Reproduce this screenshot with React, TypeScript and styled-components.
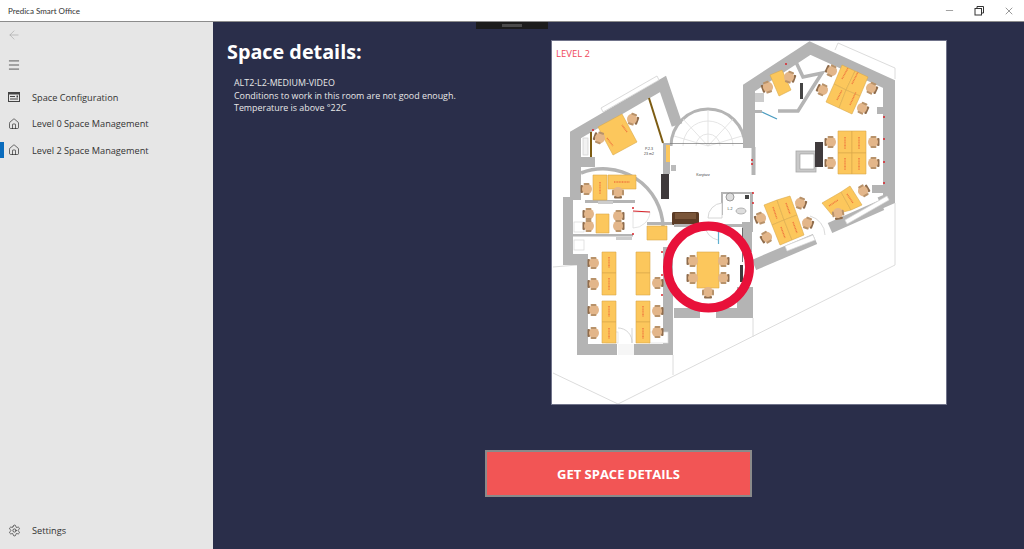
import styled, { createGlobalStyle } from "styled-components";
import { ArrowLeft, Menu, Minus, X, Settings, House } from "lucide-react";

const WALL = "#b4b4b4";
const DESK = "#fcc75c";
const DESK_LINE = "#d9a94c";

const GlobalStyle = createGlobalStyle`
  html, body {
    margin: 0;
    padding: 0;
    height: 100%;
    overflow: hidden;
    font-family: "Open Sans", "Noto Sans", sans-serif;
  }
  #root {
    height: 100%;
  }
`;

// desks as polygons, in page coordinates so they can be read against the screenshot
const desks: string[] = [
  "598,127 622,114 637,142 613,155",
  "593,175 607,175 607,200 593,200",
  "608,175 636,175 636,189 608,189",
  "596,214 609,214 609,233 596,233",
  "647,226 667,226 667,240 647,240",
  "602,252 616,252 616,273 602,273",
  "602,273 616,273 616,295 602,295",
  "602,301 616,301 616,322 602,322",
  "602,322 616,322 616,343 602,343",
  "636,252 650,252 650,273 636,273",
  "636,273 650,273 650,295 636,295",
  "636,301 650,301 650,322 636,322",
  "636,322 650,322 650,343 636,343",
  "770,75 782,70 791,90 779,96",
  "842,65 855,71 846,90 834,84",
  "855,71 868,77 860,96 846,90",
  "834,84 846,90 839,108 826,102",
  "846,90 860,96 852,114 839,108",
  "838,131 852,131 852,153 838,153",
  "852,131 866,131 866,153 852,153",
  "838,153 852,153 852,174 838,174",
  "852,153 866,153 866,174 852,174",
  "764,205 777,200 784,220 772,225",
  "777,200 790,196 797,215 784,220",
  "772,225 784,220 792,240 780,245",
  "784,220 797,215 804,235 792,240",
  "822,203 841,192 851,210 832,215",
  "841,192 850,186 862,205 851,210",
  "697,252 719,252 719,288 697,288",
];

// chair positions: x, y, direction of the backrest
const chairs: [number, number, number][] = [
  [632, 119, 110], [600, 138, 290], [587, 189, 270], [618, 192, 180],
  [589, 214, 270], [589, 226, 270], [618, 216, 90], [618, 226, 90],
  [594, 263, 270], [594, 284, 270], [594, 310, 270], [594, 333, 270],
  [657, 283, 90], [657, 311, 90], [657, 332, 90],
  [789, 77, 110], [768, 87, 250], [832, 71, 295], [823, 90, 295],
  [871, 88, 115], [862, 108, 115], [831, 142, 270], [831, 163, 270],
  [873, 142, 90], [873, 163, 90], [863, 191, 60], [838, 213, 170],
  [800, 203, 110], [807, 223, 110], [761, 218, 250], [767, 237, 240],
  [693, 261, 270], [693, 278, 270], [723, 261, 90], [723, 278, 90], [708, 292, 180],
];

const redDots: [number, number][] = [
  [884, 117], [884, 139], [884, 162], [884, 183], [633, 208], [633, 234],
  [662, 252], [662, 275], [662, 295], [753, 193], [753, 203], [786, 64],
  [593, 130], [752, 160], [752, 164],
];

const labels: [number, number, number, number][] = [
  [607, 138, 613, 146], [627, 132, 622, 125], [600, 182, 600, 194], [614, 182, 630, 182],
  [852, 84, 858, 72], [842, 79, 848, 68], [837, 100, 842, 90], [850, 105, 856, 92],
  [845, 137, 845, 149], [859, 137, 859, 149], [845, 158, 845, 170], [859, 158, 859, 170],
  [773, 207, 777, 219], [786, 203, 790, 214], [781, 227, 785, 238], [793, 222, 797, 233],
  [829, 206, 838, 200], [847, 194, 853, 203], [609, 257, 609, 268], [609, 278, 609, 290],
  [609, 306, 609, 317], [609, 328, 609, 339], [643, 306, 643, 317], [643, 328, 643, 339],
];

const FloorPlan = () => (
  <svg width="394" height="363" viewBox="552 41 394 363" style={{ display: "block" }}>
    {/* outer light lines */}
    <g fill="none" stroke="#dcdcdc" strokeWidth="1">
      <polyline points="553,267 577,265" />
      <polyline points="553,373 618,404 895,265 895,203" />
      <line x1="673" y1="355" x2="673" y2="375" />
      <line x1="753" y1="318" x2="753" y2="337" />
      <polyline points="835,50 838,43 895,68 895,79" />
    </g>

    {/* left wing */}
    <g fill="none" stroke={WALL}>
      <polyline points="575.5,200 575.5,135 663,84 677,125" strokeWidth="11" />
      <path d="M581 173 A60 60 0 0 1 663 226" strokeWidth="3.5" />
      <path d="M671 146 A37 37 0 0 1 745 146" strokeWidth="3" />
    </g>
    <g fill="none" stroke="#dedede" strokeWidth="0.8">
      <path d="M683 146 A25 25 0 0 1 733 146" />
      <path d="M696 146 A12 12 0 0 1 720 146" />
      <path d="M708 146 V110 M708 146 L683 119 M708 146 L733 119 M708 146 L674 136 M708 146 L742 136" />
    </g>
    <polygon points="601,108 657,76 659,80 603,112" fill="#fff" stroke="#d0d0d0" strokeWidth="0.8" />
    <rect x="581" y="157" width="14" height="10" fill={WALL} />
    <rect x="583" y="138" width="5" height="17" fill="#f2f2f2" stroke="#cfcfcf" strokeWidth="0.7" />
    <g stroke="#7d5c12" strokeWidth="2" fill="none">
      <line x1="591" y1="132" x2="591" y2="157" />
      <line x1="649" y1="98" x2="663" y2="143" />
    </g>
    <rect x="663" y="143" width="7" height="31" fill={WALL} />
    <rect x="666" y="145" width="4" height="17" fill={DESK} />
    <rect x="661" y="174" width="8" height="25" fill="#3f3a3c" />
    <rect x="671" y="165" width="5" height="6" fill="#bbb" />
    <line x1="670" y1="143.5" x2="752" y2="143.5" stroke="#777" strokeWidth="0.7" />
    <text x="703" y="175.5" fontSize="3.6" textAnchor="middle" fill="#444" fontFamily="Liberation Sans, sans-serif">Korytarz</text>
    <text x="649" y="150" fontSize="3.6" textAnchor="middle" fill="#444" fontFamily="Liberation Sans, sans-serif">P.2.3</text>
    <text x="649" y="155" fontSize="3.6" textAnchor="middle" fill="#444" fontFamily="Liberation Sans, sans-serif">23 m2</text>

    {/* lower left rooms */}
    <polygon
      points="563,197 573,197 573,254 588,254 588,344 617,344 617,355 577,355 577,265 563,265"
      fill={WALL}
    />
    <polygon points="634,344 663,344 663,247 673,247 673,355 634,355" fill={WALL} />
    <rect x="585" y="200" width="50" height="3" fill={WALL} />
    <rect x="573" y="234" width="60" height="2.5" fill={WALL} />
    <rect x="616" y="237" width="16" height="3" fill="#ccc" />
    <rect x="598" y="201" width="15" height="3" fill="#ccc" />
    <rect x="647" y="222" width="29" height="3" fill={WALL} />
    <rect x="606" y="332" width="12" height="11" fill="#fff" stroke="#ddd" strokeWidth="0.7" />
    <rect x="649" y="332" width="19" height="11" fill="#fff" stroke="#ddd" strokeWidth="0.7" />
    <rect x="618" y="344" width="16" height="11" fill="#f6f6f6" />
    <path d="M618 328 A14 14 0 0 1 632 343 V328" fill="#fff" stroke="#ccc" strokeWidth="0.8" />
    <path d="M633 212 H650 M633 212 V228 M650 212 A17 17 0 0 1 633 228" fill="none" stroke="#ddd" strokeWidth="0.8" />
    <line x1="633" y1="211" x2="650" y2="212" stroke="#d8232a" strokeWidth="1.2" />
    <rect x="574" y="222" width="10" height="10" fill="#fff" stroke="#d8d8d8" strokeWidth="0.7" />
    <rect x="574" y="240" width="10" height="10" fill="#fff" stroke="#d8d8d8" strokeWidth="0.7" />

    {/* sofa and wc */}
    <rect x="672" y="212" width="27" height="13" rx="1.5" fill="#5b3b25" />
    <rect x="675" y="213" width="21" height="6" fill="#7a563a" />
    <g fill="none" stroke={WALL} strokeWidth="2">
      <polyline points="722,215 722,193 752,193 752,222" />
    </g>
    <rect x="742" y="222" width="10" height="30" fill={WALL} />
    <rect x="674" y="224" width="68" height="3" fill={WALL} />
    <circle cx="730" cy="197" r="4" fill="#ddd" stroke="#888" strokeWidth="0.8" />
    <ellipse cx="741" cy="211" rx="5" ry="3" fill="#ddd" stroke="#999" strokeWidth="0.7" />
    <rect x="745" y="195" width="4" height="4" fill="#444" />
    <path d="M722 203 A15 15 0 0 0 708 218 H722 Z" fill="#fff" stroke="#ccc" strokeWidth="0.8" />
    <text x="730" y="210" fontSize="3.6" textAnchor="middle" fill="#444" fontFamily="Liberation Sans, sans-serif">L.2</text>
    <path d="M705 226 A16 16 0 0 0 718 240" fill="none" stroke="#d0d0d0" strokeWidth="0.8" />
    <line x1="718.5" y1="230" x2="718.5" y2="244" stroke="#5fb0d0" strokeWidth="1.2" />

    {/* meeting room below the corridor */}
    <rect x="674" y="308" width="26" height="10" fill={WALL} />
    <rect x="716" y="308" width="37" height="10" fill={WALL} />
    <rect x="737" y="287" width="16" height="22" fill={WALL} />
    <rect x="740" y="265" width="3" height="17" fill="#3f3a3c" />
    <line x1="742.5" y1="228" x2="742.5" y2="262" stroke="#555" strokeWidth="0.8" />

    {/* right wing */}
    <g fill="none" stroke={WALL}>
      <polyline points="749,148 749,88 810,48 889,84 889,199 880,203" strokeWidth="12" />
      <polyline points="753.5,147 753.5,175" strokeWidth="4" />
      <polyline points="751.5,193 751.5,232" strokeWidth="3" />
      <polyline points="795,60 803,77 822,73 813,87 798,111 778,111" strokeWidth="3.5" />
      <line x1="755" y1="111.5" x2="762" y2="111.5" strokeWidth="3" />
      <line x1="754" y1="265" x2="815" y2="239" strokeWidth="11" />
      <line x1="830" y1="228" x2="882" y2="205" strokeWidth="11" />
    </g>
    <polygon points="845,220 887,196 889,200 847,224" fill="#fff" stroke="#d8d8d8" strokeWidth="0.7" />
    <polygon points="785,246 813,235 815,240 787,251" fill="#fff" stroke="#d8d8d8" strokeWidth="0.7" />
    <rect x="877" y="107" width="7" height="7" fill={WALL} />
    <rect x="872" y="185" width="12" height="8" fill={WALL} />
    <rect x="755" y="93" width="9" height="9" fill="#ccc" />
    <line x1="762" y1="112" x2="777" y2="119" stroke="#4a9cc0" strokeWidth="1.2" />
    <rect x="800" y="83" width="3" height="16" fill="#444" />
    <path d="M810 216 A20 20 0 0 1 825 235" fill="none" stroke="#d0d0d0" strokeWidth="0.8" />
    <rect x="796" y="151" width="20" height="21" fill="#c8c8c8" stroke="#a8a8a8" strokeWidth="0.8" />
    <rect x="800" y="154" width="14" height="15" fill="#fff" stroke="#999" strokeWidth="0.6" />
    <rect x="815" y="142" width="8" height="25" fill="#3f3a3c" />

    {/* furniture */}
    {desks.map((points) => (
      <polygon key={points} points={points} fill={DESK} stroke={DESK_LINE} strokeWidth="0.6" />
    ))}
    <g stroke="#ee6b3b" strokeWidth="1.4" strokeDasharray="1 0.6" opacity="0.85">
      {labels.map(([x1, y1, x2, y2]) => (
        <line key={`${x1}-${y1}`} x1={x1} y1={y1} x2={x2} y2={y2} />
      ))}
    </g>
    {chairs.map(([x, y, angle]) => (
      <g key={`${x}-${y}`} transform={`translate(${x} ${y}) rotate(${angle})`}>
        <rect x="-4" y="-6.5" width="8" height="2.5" rx="1" fill="#8f6c4c" />
        <ellipse rx="5.2" ry="5" fill="#e3b68a" />
        <rect x="-6" y="-3.5" width="2" height="6" rx="1" fill="#b8926a" />
        <rect x="4" y="-3.5" width="2" height="6" rx="1" fill="#b8926a" />
      </g>
    ))}
    {redDots.map(([x, y]) => (
      <circle key={`${x}-${y}`} cx={x} cy={y} r="1" fill="#d8232a" />
    ))}

    <circle cx="708.5" cy="267" r="41" fill="none" stroke="#e8113a" strokeWidth="9" />
  </svg>
);

const ConfigIcon = () => (
  <svg width="12" height="10" viewBox="0 0 12 10">
    <rect x="0" y="0" width="12" height="10" fill="#444" />
    <rect x="1" y="2.5" width="10" height="6.5" fill="#e6e6e6" />
    <rect x="2" y="4" width="5" height="1" fill="#444" />
    <rect x="2" y="6.5" width="8" height="1" fill="#444" />
    <rect x="8.5" y="3.5" width="1.5" height="2" fill="#444" />
  </svg>
);

const RestoreIcon = () => (
  <svg width="10" height="10" viewBox="0 0 10 10" fill="none" stroke="#333" strokeWidth="1">
    <rect x="1" y="2.5" width="6.5" height="6.5" />
    <path d="M3 2.5V.5h6.5V7H7.5" />
  </svg>
);

const App = () => {
  return (
    <Page>
      <GlobalStyle />
      <TitleBar>
        <AppName>Predica Smart Office</AppName>
        <WindowControls>
          <WindowButton>
            <Minus size={11} strokeWidth={1} />
          </WindowButton>
          <WindowButton>
            <RestoreIcon />
          </WindowButton>
          <WindowButton>
            <X size={12} strokeWidth={1} />
          </WindowButton>
        </WindowControls>
      </TitleBar>
      <Body>
        <Sidebar>
          <IconRow $height={26}>
            <ArrowLeft size={14} strokeWidth={1} color="#a0a0a0" />
          </IconRow>
          <IconRow $height={33}>
            <Menu size={14} strokeWidth={1.2} color="#222" />
          </IconRow>
          <NavList>
            <NavItem>
              <NavIcon>
                <ConfigIcon />
              </NavIcon>
              Space Configuration
            </NavItem>
            <NavItem>
              <NavIcon>
                <House size={12} strokeWidth={1.2} color="#111" />
              </NavIcon>
              Level 0 Space Management
            </NavItem>
            <NavItem $active>
              <NavIcon>
                <House size={12} strokeWidth={1.2} color="#111" />
              </NavIcon>
              Level 2 Space Management
            </NavItem>
          </NavList>
          <SettingsItem>
            <NavIcon>
              <Settings size={13} strokeWidth={1.1} color="#111" />
            </NavIcon>
            Settings
          </SettingsItem>
        </Sidebar>
        <Main>
          <DragHandle>
            <DragGrip />
          </DragHandle>
          <Content>
            <Details>
              <Title>Space details:</Title>
              <DetailLines>
                <div>ALT2-L2-MEDIUM-VIDEO</div>
                <div>Conditions to work in this room are not good enough.</div>
                <div>Temperature is above °22C</div>
              </DetailLines>
            </Details>
            <MapCard>
              <LevelLabel>LEVEL 2</LevelLabel>
              <FloorPlan />
            </MapCard>
          </Content>
          <ActionRow>
            <ActionButton>GET SPACE DETAILS</ActionButton>
          </ActionRow>
        </Main>
      </Body>
    </Page>
  );
};

export default App;

const Page = styled.div`
  display: flex;
  flex-direction: column;
  width: 1024px;
  height: 549px;
  overflow: hidden;
`;

const TitleBar = styled.header`
  display: flex;
  justify-content: space-between;
  align-items: center;
  height: 22px;
  background-color: #fff;
  border-bottom: 1px solid #8c8c8c;
  box-sizing: border-box;
`;

const AppName = styled.span`
  margin-left: 8px;
  font-family: Lato, "Open Sans", sans-serif;
  font-size: 8px;
  color: #333;
`;

const WindowControls = styled.div`
  display: flex;
`;

const WindowButton = styled.div`
  display: flex;
  justify-content: center;
  align-items: center;
  width: 30px;
  height: 20px;
  color: #333;
`;

const Body = styled.div`
  display: flex;
  flex: 1;
  min-height: 0;
`;

const Sidebar = styled.nav`
  display: flex;
  flex-direction: column;
  width: 213px;
  background-color: #e6e6e6;
  color: #333;
`;

const IconRow = styled.div<{ $height: number }>`
  display: flex;
  align-items: center;
  height: ${(p) => p.$height}px;
  padding-left: 7px;
`;

const NavList = styled.div`
  display: flex;
  flex-direction: column;
  flex: 1;
  margin-top: 3px;
`;

const NavItem = styled.div<{ $active?: boolean }>`
  position: relative;
  display: flex;
  align-items: center;
  height: 26.5px;
  font-size: 9.2px;
  &::before {
    content: "";
    display: ${(p) => (p.$active ? "block" : "none")};
    position: absolute;
    left: 0;
    top: 5px;
    width: 4px;
    height: 16px;
    background-color: #0a6cbd;
  }
`;

const SettingsItem = styled(NavItem)`
  margin-bottom: 5px;
`;

const NavIcon = styled.span`
  display: flex;
  justify-content: center;
  width: 14px;
  margin: 0 11px 0 7px;
`;

const Main = styled.main`
  position: relative;
  display: flex;
  flex-direction: column;
  flex: 1;
  background-color: #2a2e4a;
`;

const DragHandle = styled.div`
  position: absolute;
  top: 0;
  left: 263px;
  display: flex;
  justify-content: center;
  align-items: center;
  width: 72px;
  height: 7px;
  background-color: #1c1c1c;
`;

const DragGrip = styled.div`
  width: 20px;
  height: 3px;
  background-color: #4a4a4a;
`;

const Content = styled.section`
  display: flex;
  justify-content: space-between;
  padding: 19px 78px 0 14px;
`;

const Details = styled.div`
  color: #fff;
`;

const Title = styled.h1`
  margin: 0;
  font-size: 19.8px;
  line-height: 22px;
  font-weight: 700;
`;

const DetailLines = styled.div`
  margin: 14px 0 0 7px;
  font-size: 8.9px;
  line-height: 12.6px;
  color: #e8e8e8;
`;

const MapCard = styled.div`
  position: relative;
  width: 394px;
  height: 363px;
  background-color: #fff;
  box-shadow: 0 0 0 1px #70738a;
`;

const LevelLabel = styled.span`
  position: absolute;
  top: 6px;
  left: 4px;
  font-size: 9.5px;
  line-height: 13px;
  color: #f0475a;
`;

const ActionRow = styled.div`
  display: flex;
  justify-content: flex-start;
  padding: 46px 0 0 272px;
`;

const ActionButton = styled.button`
  width: 267px;
  height: 47px;
  border: 2px solid #8a8a8a;
  background-color: #f25555;
  color: #fff;
  font-family: inherit;
  font-size: 13px;
  font-weight: 700;
`;
